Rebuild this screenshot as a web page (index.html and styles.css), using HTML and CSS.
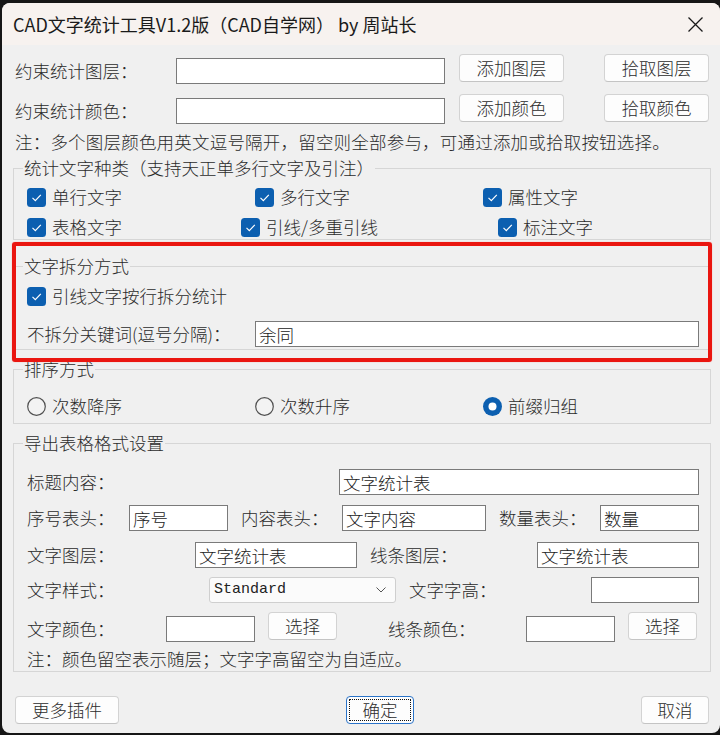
FILE: index.html
```html
<!DOCTYPE html>
<html lang="zh-CN">
<head>
    <meta charset="UTF-8">
    <title>CAD文字统计工具V1.2版</title>
    <link rel="stylesheet" href="styles.css">
</head>
<body>
<div class="window">
    <div class="titlebar">
        <span>CAD文字统计工具V1.2版（CAD自学网） by 周站长</span>
        <svg class="close" width="15" height="15" viewBox="0 0 15 15">
            <path d="M0.5 0.5 L14.5 14.5 M14.5 0.5 L0.5 14.5" stroke="#1a1a1a" stroke-width="1.3" fill="none"/>
        </svg>
    </div>

    <div class="content">
        <div class="pick-row">
            <span class="lab">约束统计图层：</span>
            <input class="field" type="text">
            <button class="btn">添加图层</button>
            <button class="btn">拾取图层</button>
        </div>
        <div class="pick-row second">
            <span class="lab">约束统计颜色：</span>
            <input class="field" type="text">
            <button class="btn">添加颜色</button>
            <button class="btn">拾取颜色</button>
        </div>
        <div class="note">注：多个图层颜色用英文逗号隔开，留空则全部参与，可通过添加或拾取按钮选择。</div>

        <!-- text kinds -->
        <fieldset class="group kinds">
            <legend>统计文字种类（支持天正单多行文字及引注）</legend>
            <div class="check-row row-a">
                <label class="check"><svg width="19" height="19" viewBox="0 0 19 19"><rect width="19" height="19" rx="3.5" fill="#0c5fb0"/><path d="M5.5 9.8 L8.3 12.6 L13.8 6.8" stroke="#fff" stroke-width="1.2" fill="none"/></svg>单行文字</label>
                <label class="check"><svg width="19" height="19" viewBox="0 0 19 19"><rect width="19" height="19" rx="3.5" fill="#0c5fb0"/><path d="M5.5 9.8 L8.3 12.6 L13.8 6.8" stroke="#fff" stroke-width="1.2" fill="none"/></svg>多行文字</label>
                <label class="check"><svg width="19" height="19" viewBox="0 0 19 19"><rect width="19" height="19" rx="3.5" fill="#0c5fb0"/><path d="M5.5 9.8 L8.3 12.6 L13.8 6.8" stroke="#fff" stroke-width="1.2" fill="none"/></svg>属性文字</label>
            </div>
            <div class="check-row row-b">
                <label class="check"><svg width="19" height="19" viewBox="0 0 19 19"><rect width="19" height="19" rx="3.5" fill="#0c5fb0"/><path d="M5.5 9.8 L8.3 12.6 L13.8 6.8" stroke="#fff" stroke-width="1.2" fill="none"/></svg>表格文字</label>
                <label class="check"><svg width="19" height="19" viewBox="0 0 19 19"><rect width="19" height="19" rx="3.5" fill="#0c5fb0"/><path d="M5.5 9.8 L8.3 12.6 L13.8 6.8" stroke="#fff" stroke-width="1.2" fill="none"/></svg>引线/多重引线</label>
                <label class="check"><svg width="19" height="19" viewBox="0 0 19 19"><rect width="19" height="19" rx="3.5" fill="#0c5fb0"/><path d="M5.5 9.8 L8.3 12.6 L13.8 6.8" stroke="#fff" stroke-width="1.2" fill="none"/></svg>标注文字</label>
            </div>
        </fieldset>

        <!-- split options, framed in red -->
        <div class="marked">
            <fieldset class="group split">
                <legend>文字拆分方式</legend>
                <div class="split-check">
                    <label class="check"><svg width="19" height="19" viewBox="0 0 19 19"><rect width="19" height="19" rx="3.5" fill="#0c5fb0"/><path d="M5.5 9.8 L8.3 12.6 L13.8 6.8" stroke="#fff" stroke-width="1.2" fill="none"/></svg>引线文字按行拆分统计</label>
                </div>
                <div class="keyword-row">
                    <span class="lab">不拆分关键词(逗号分隔)：</span>
                    <input class="field" type="text" value="余同">
                </div>
            </fieldset>
        </div>

        <fieldset class="group sort">
            <legend>排序方式</legend>
            <div class="radio-row">
                <label class="radio"><svg width="19" height="19" viewBox="0 0 19 19"><circle cx="9.5" cy="9.5" r="8.8" fill="#f3f3f3" stroke="#505050" stroke-width="1.2"/></svg>次数降序</label>
                <label class="radio"><svg width="19" height="19" viewBox="0 0 19 19"><circle cx="9.5" cy="9.5" r="8.8" fill="#f3f3f3" stroke="#505050" stroke-width="1.2"/></svg>次数升序</label>
                <label class="radio"><svg width="19" height="19" viewBox="0 0 19 19"><circle cx="9.5" cy="9.5" r="9.5" fill="#0c5fb0"/><circle cx="9.5" cy="9.5" r="4" fill="#fff"/></svg>前缀归组</label>
            </div>
        </fieldset>

        <fieldset class="group export">
            <legend>导出表格格式设置</legend>
            <div class="row r-title">
                <span class="lab">标题内容：</span>
                <input class="field" type="text" value="文字统计表">
            </div>
            <div class="row r-head">
                <span class="lab">序号表头：</span>
                <input class="field" type="text" value="序号">
                <span class="lab after">内容表头：</span>
                <input class="field" type="text" value="文字内容">
                <span class="lab after">数量表头：</span>
                <input class="field" type="text" value="数量">
            </div>
            <div class="row r-layer">
                <span class="lab">文字图层：</span>
                <input class="field" type="text" value="文字统计表">
                <span class="lab after">线条图层：</span>
                <input class="field" type="text" value="文字统计表">
            </div>
            <div class="row r-style">
                <span class="lab">文字样式：</span>
                <div class="combo">
                    <span>Standard</span>
                    <svg width="10" height="6" viewBox="0 0 10 6"><path d="M0.5 0.5 L5 5 L9.5 0.5" stroke="#555" stroke-width="1" fill="none"/></svg>
                </div>
                <span class="lab after">文字字高：</span>
                <input class="field" type="text">
            </div>
            <div class="row r-color">
                <span class="lab">文字颜色：</span>
                <input class="field" type="text">
                <button class="btn">选择</button>
                <span class="lab after">线条颜色：</span>
                <input class="field" type="text">
                <button class="btn">选择</button>
            </div>
            <div class="note small">注：颜色留空表示随层；文字字高留空为自适应。</div>
        </fieldset>

        <div class="footer">
            <button class="btn wide">更多插件</button>
            <button class="btn default">确定</button>
            <button class="btn">取消</button>
        </div>
    </div>
</div>
</body>
</html>
```

FILE: styles.css
```css
body {
    margin: 0;
    background-color: #161616;
    font-family: "Noto Sans CJK SC", "Noto Sans", sans-serif;
}

.window {
    width: 718px;
    height: 730px;
    margin: 3px 0 0 2px;
    background-color: #f0f0f0;
    border-radius: 8px;
    overflow: hidden;
}

.titlebar {
    height: 42px;
    padding: 0 17px 0 11px;
    display: flex;
    align-items: center;
    justify-content: space-between;
    background-color: #f7f2ef;
    color: #1a1a1a;
    font-size: 18px;
}

.close {
    display: block;
}

.content {
    padding: 9px 9px 0 11px;
    font-size: 17.5px;
    font-weight: 300;
    line-height: 20px;
    color: #2b2b2b;
}

/* inputs and buttons */
.field {
    box-sizing: border-box;
    height: 26px;
    margin: 0;
    padding: 0 3px;
    border: 1px solid #7a7a7a;
    background-color: #ffffff;
    font: inherit;
    color: #222;
    outline: none;
}

.btn {
    box-sizing: border-box;
    height: 28px;
    margin: 0;
    padding: 0;
    border: 1px solid #d3d3d3;
    border-bottom-color: #c4c4c4;
    border-radius: 4px;
    background-color: #fdfdfd;
    font: inherit;
    color: #2b2b2b;
}

.lab {
    white-space: nowrap;
}

/* top rows */
.pick-row {
    display: grid;
    grid-template-columns: 163px 269px 119px 145px;
    height: 30px;
}

.pick-row.second {
    margin-top: 10px;
}

.pick-row .lab {
    align-self: center;
    padding: 4px 0 0 2px;
}

.pick-row .field {
    align-self: end;
    width: 269px;
}

.pick-row .btn {
    align-self: start;
    justify-self: end;
    width: 105px;
}

.note {
    margin-top: 8px;
    padding-left: 2px;
    letter-spacing: 0.2px;
}

/* group boxes */
.group {
    margin: 0;
    padding: 0;
    border: 1px solid #d6d6d6;
    min-width: 0;
}

.group legend {
    margin-left: 9px;
    padding: 0 1px;
    line-height: 20px;
}

.group > :not(legend) {
    margin-left: 13px;
}

.check, .radio {
    display: flex;
    align-items: center;
    gap: 6px;
    white-space: nowrap;
}

.check svg, .radio svg {
    flex: none;
}

.kinds {
    margin-top: 6px;
    padding: 8px 0 1px 0;
}

.check-row {
    display: grid;
    height: 22px;
}

.row-a {
    grid-template-columns: 228px 228px auto;
}

.row-b {
    margin-top: 8px;
    grid-template-columns: 214px 257px auto;
}

.marked {
    position: relative;
    margin-top: 16px;
}

.marked::after {
    content: "";
    position: absolute;
    left: -1px;
    right: -1px;
    top: -14px;
    bottom: -12px;
    border: 4.5px solid #ea1610;
    border-radius: 3px;
    box-shadow: 0 0 1px #f07a70;
}

.split {
    padding: 9px 0 2px 0;
}

.split-check {
    height: 22px;
    display: flex;
}

.keyword-row {
    display: grid;
    grid-template-columns: 228px 444px;
    align-items: center;
    margin-top: 14px;
    height: 26px;
}

.sort {
    margin-top: 9px;
    padding: 16px 0 6px 0;
}

.radio-row {
    display: grid;
    grid-template-columns: 228px 228px auto;
    height: 22px;
}

/* export settings */
.export {
    margin-top: 9px;
    padding: 16px 0 2px 0;
}

.row {
    display: grid;
    align-items: center;
    height: 26px;
}

.row + .row {
    margin-top: 10px;
}

.row .field {
    width: 100%;
}

.r-title {
    grid-template-columns: 312px 360px;
}

.r-head {
    grid-template-columns: 102px 99px 114px 144px 114px 99px;
}

.r-layer {
    margin-top: 11px !important;
    grid-template-columns: 168px 162px 180px 162px;
}

.r-style {
    margin-top: 9px !important;
    grid-template-columns: 182px 187px 195px 108px;
}

.lab.after {
    padding-left: 13px;
}

.combo {
    box-sizing: border-box;
    height: 26px;
    display: flex;
    align-items: center;
    justify-content: space-between;
    padding: 0 9px 0 4px;
    border: 1px solid #cfcfcf;
    border-radius: 3px;
    background-color: #fbfbfb;
    font-family: "Liberation Mono", monospace;
    font-size: 15px;
    font-weight: 400;
    color: #222;
}

.r-color {
    margin-top: 8px !important;
    height: 31px;
    grid-template-columns: 139px 89px 82px 189px 89px 82px;
}

.r-color .lab {
    padding-top: 5px;
}

.r-color .lab.after {
    padding-left: 51px;
}

.r-color .field {
    align-self: end;
}

.r-color .btn {
    align-self: start;
    margin: 1px 0 0 13px;
    width: 69px;
}

.note.small {
    margin-top: 7px;
    padding-left: 0;
    letter-spacing: 0;
}

/* bottom buttons */
.footer {
    display: flex;
    justify-content: space-between;
    margin: 24px 2px 0 2px;
}

.footer .btn {
    width: 68px;
    height: 28px;
}

.footer .wide {
    width: 104px;
}

.footer .default {
    border-color: #2a73c8;
    outline: 1px dotted #111;
    outline-offset: -4px;
}
```
